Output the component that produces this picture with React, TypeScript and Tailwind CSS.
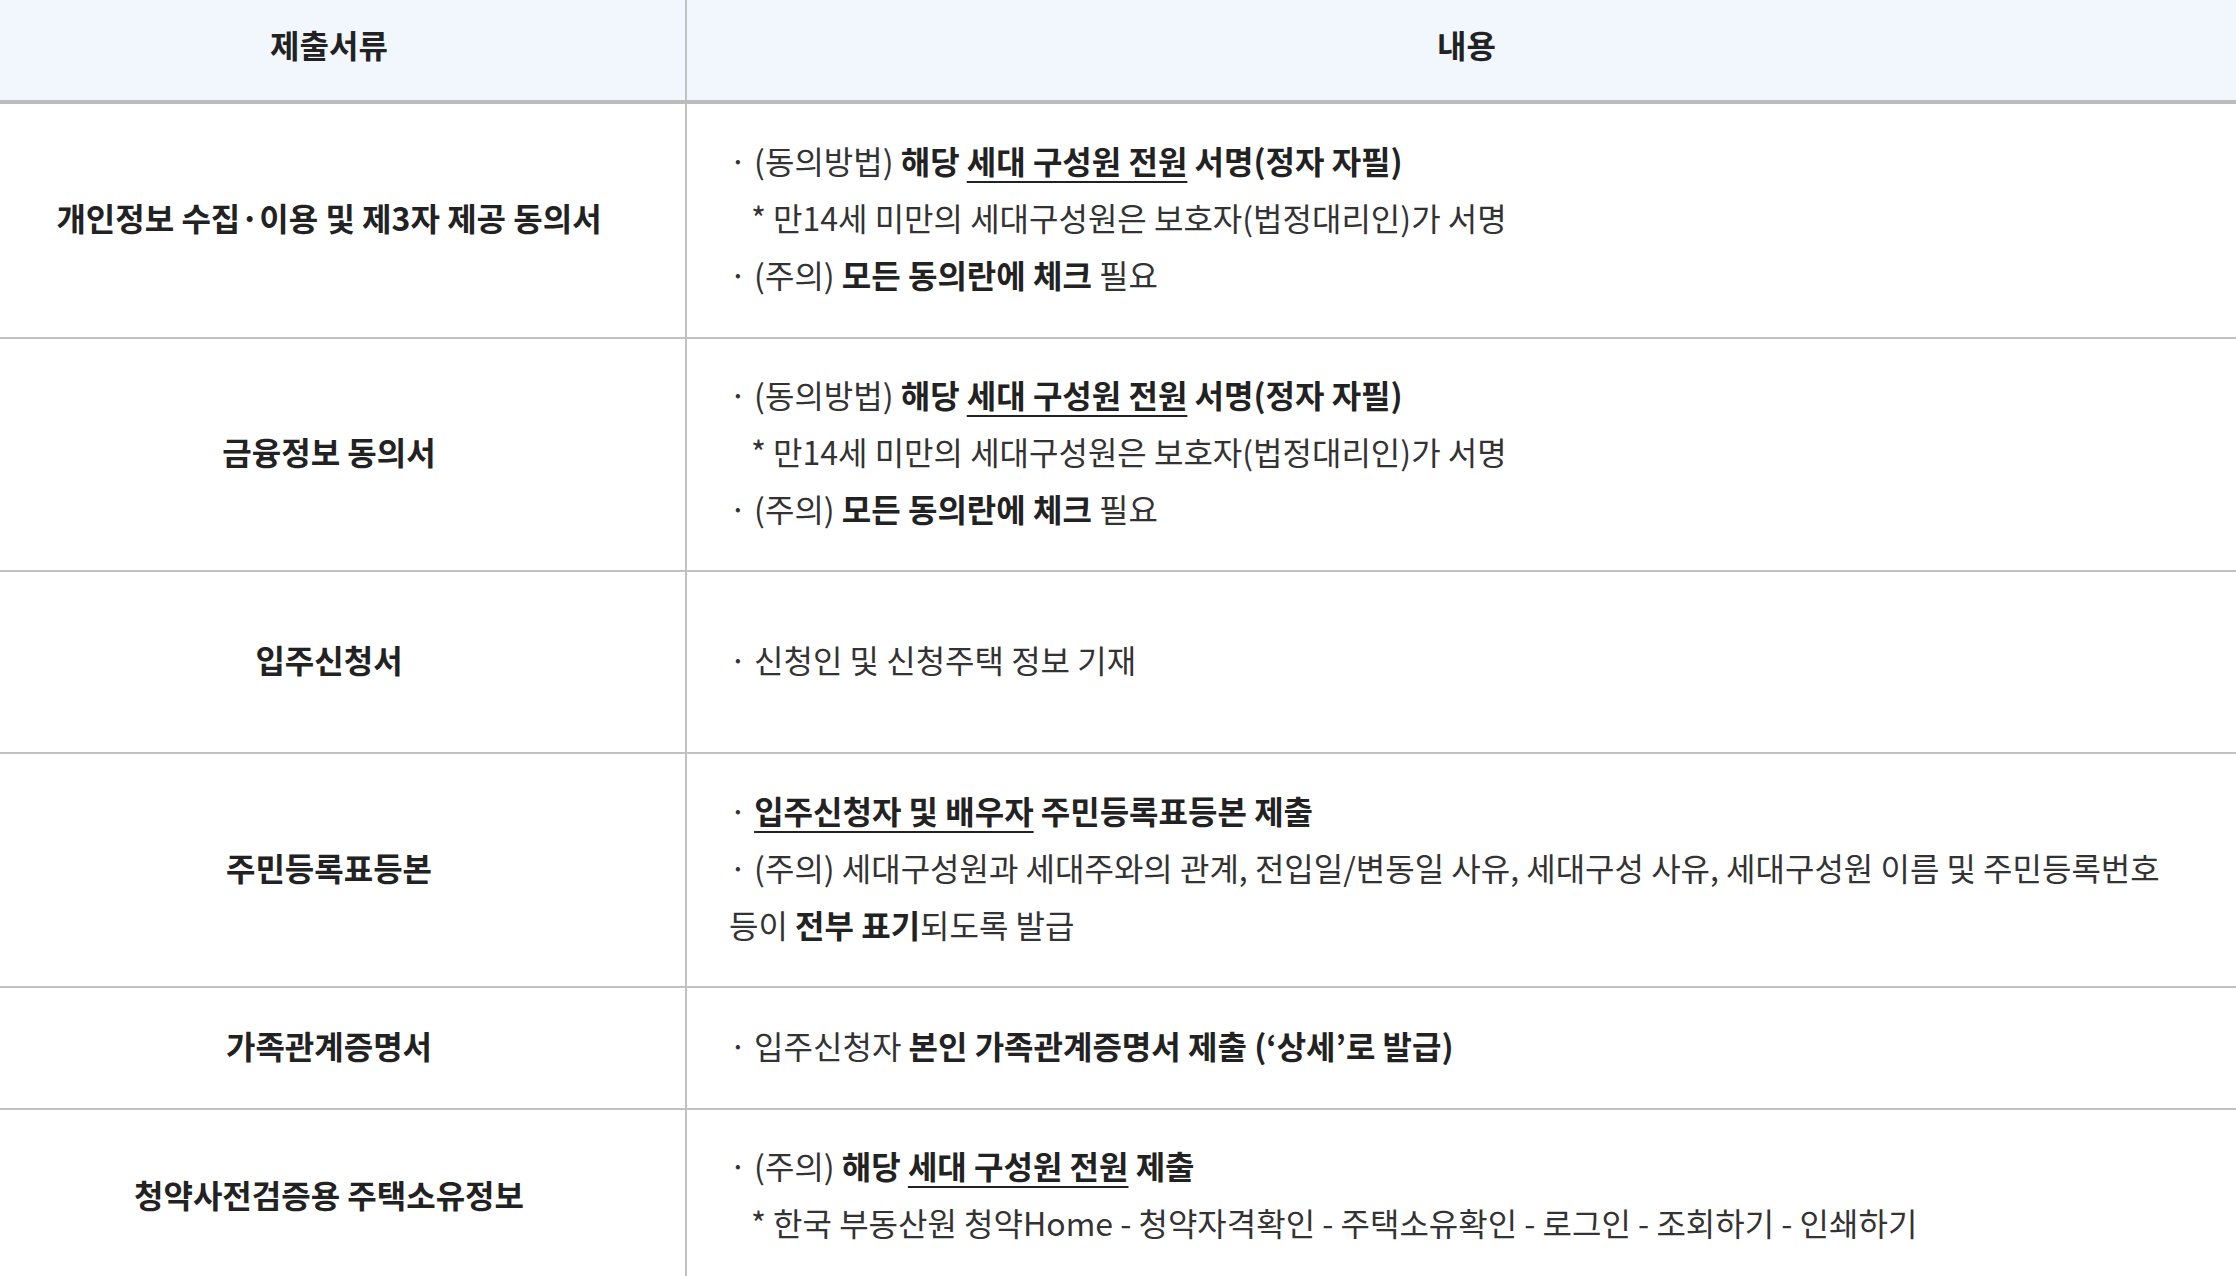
import React from "react";

const B = ({ children }: { children: React.ReactNode }) => (
  <span className="font-bold text-[#222]">{children}</span>
);
const U = ({ children }: { children: React.ReactNode }) => (
  <span className="font-bold text-[#222] underline decoration-2 underline-offset-[7px]">{children}</span>
);

function Row({
  title,
  h,
  children,
  last,
}: {
  title: string;
  h: string;
  children: React.ReactNode;
  last?: boolean;
}) {
  return (
    <div className={`flex ${last ? "" : "border-b-2 border-[#c1c1c1]"}`}>
      <div
        className={`w-[687px] shrink-0 border-r-2 border-[#c1c1c1] flex items-center justify-center pr-[27px] pb-[6px] font-bold text-[#222] ${h}`}
      >
        {title}
      </div>
      <div className={`flex-1 flex flex-col justify-center pl-[42px] pr-[60px] pb-[6px] ${h}`}>{children}</div>
    </div>
  );
}

export default function App() {
  return (
    <div className="w-[2236px] h-[1276px] overflow-hidden bg-white text-[32px] leading-[57px] text-[#333] font-['Noto_Sans_CJK_KR','Noto_Sans',sans-serif]">
      <div className="flex h-[104px] bg-[#f2f7fe] border-b-4 border-[#bbbbbb]">
        <div className="w-[687px] shrink-0 border-r-2 border-[#c1c1c1] flex items-center justify-center pr-[27px] pb-[12px] font-bold text-[#222]">
          제출서류
        </div>
        <div className="flex-1 flex items-center justify-center pb-[12px] pl-[10px] font-bold text-[#222]">
          내용
        </div>
      </div>

      <Row title="개인정보 수집·이용 및 제3자 제공 동의서" h="h-[233px]">
        <div>
          · (동의방법) <B>해당</B> <U>세대 구성원 전원</U> <B>서명(정자 자필)</B>
        </div>
        <div className="pl-[22px]">* 만14세 미만의 세대구성원은 보호자(법정대리인)가 서명</div>
        <div>
          · (주의) <B>모든 동의란에 체크</B> 필요
        </div>
      </Row>

      <Row title="금융정보 동의서" h="h-[231px]">
        <div>
          · (동의방법) <B>해당</B> <U>세대 구성원 전원</U> <B>서명(정자 자필)</B>
        </div>
        <div className="pl-[22px]">* 만14세 미만의 세대구성원은 보호자(법정대리인)가 서명</div>
        <div>
          · (주의) <B>모든 동의란에 체크</B> 필요
        </div>
      </Row>

      <Row title="입주신청서" h="h-[180px]">
        <div>· 신청인 및 신청주택 정보 기재</div>
      </Row>

      <Row title="주민등록표등본" h="h-[232px]">
        <div>
          · <U>입주신청자 및 배우자</U> <B>주민등록표등본 제출</B>
        </div>
        <div>
          · (주의) 세대구성원과 세대주와의 관계, 전입일/변동일 사유, 세대구성 사유, 세대구성원 이름 및 주민등록번호 등이{" "}
          <B>전부 표기</B>되도록 발급
        </div>
      </Row>

      <Row title="가족관계증명서" h="h-[120px]">
        <div>
          · 입주신청자 <B>본인 가족관계증명서 제출 (‘상세’로 발급)</B>
        </div>
      </Row>

      <Row title="청약사전검증용 주택소유정보" h="h-[174px]" last>
        <div>
          · (주의) <B>해당</B> <U>세대 구성원 전원</U> <B>제출</B>
        </div>
        <div className="pl-[22px]">
          * 한국 부동산원 청약Home - 청약자격확인 - 주택소유확인 - 로그인 - 조회하기 - 인쇄하기
        </div>
      </Row>
    </div>
  );
}
